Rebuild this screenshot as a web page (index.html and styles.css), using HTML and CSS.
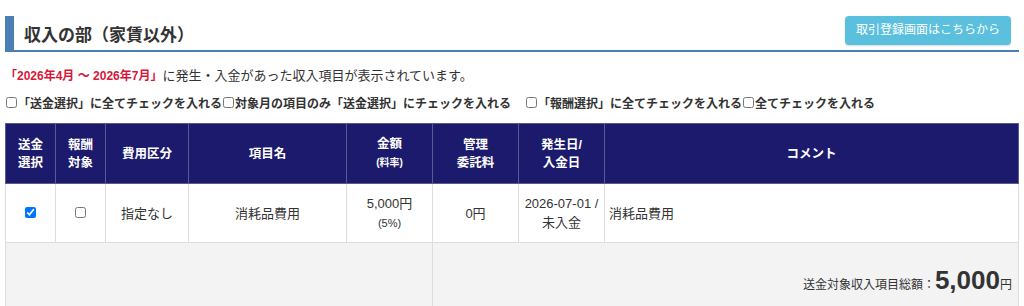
FILE: index.html
```html
<!DOCTYPE html>
<html lang="ja">
<head>
    <meta charset="UTF-8">
    <meta name="viewport" content="width=device-width, initial-scale=1.0">
    <title>収入の部（家賃以外）</title>
    <link rel="stylesheet" href="styles.css">
</head>
<body>
    <div class="section">
        <div class="section-head">
            <h2>収入の部（家賃以外）</h2>
            <a class="btn-info" href="#">取引登録画面はこちらから</a>
        </div>

        <p class="period"><span class="period-range">「2026年4月 〜 2026年7月」</span>に発生・入金があった収入項目が表示されています。</p>

        <div class="bulk-checks">
            <label><input type="checkbox">「送金選択」に全てチェックを入れる</label>
            <label><input type="checkbox">対象月の項目のみ「送金選択」にチェックを入れる</label>
            <label class="gap"><input type="checkbox">「報酬選択」に全てチェックを入れる</label>
            <label><input type="checkbox">全てチェックを入れる</label>
        </div>

        <table class="income-table">
            <colgroup>
                <col style="width: 50px">
                <col style="width: 50px">
                <col style="width: 83px">
                <col style="width: 158px">
                <col style="width: 86px">
                <col style="width: 86px">
                <col style="width: 86px">
                <col>
            </colgroup>
            <thead>
                <tr>
                    <th>送金<br>選択</th>
                    <th>報酬<br>対象</th>
                    <th>費用区分</th>
                    <th>項目名</th>
                    <th>金額<br><small>(料率)</small></th>
                    <th>管理<br>委託料</th>
                    <th>発生日/<br>入金日</th>
                    <th>コメント</th>
                </tr>
            </thead>
            <tbody>
                <tr>
                    <td><input type="checkbox" checked></td>
                    <td><input type="checkbox"></td>
                    <td>指定なし</td>
                    <td>消耗品費用</td>
                    <td>5,000円<br><small>(5%)</small></td>
                    <td>0円</td>
                    <td>2026-07-01 /<br>未入金</td>
                    <td class="comment">消耗品費用</td>
                </tr>
            </tbody>
            <tfoot>
                <tr>
                    <td colspan="5"></td>
                    <td colspan="3" class="total">送金対象収入項目総額：<strong>5,000</strong>円</td>
                </tr>
            </tfoot>
        </table>
    </div>
</body>
</html>
```

FILE: styles.css
```css
:root {
    --navy: #1b1a6c;
    --accent: #4a7fb5;
    --info: #5bc0de;
    --border: #dddddd;
    --text: #333333;
    --red: #d6173a;
}

body {
    font-family: "Liberation Sans", "Noto Sans CJK JP", sans-serif;
    color: var(--text);
    background: #ffffff;
    margin: 0;
    padding: 16px 5px 0;
    font-size: 12px;
}

.section-head {
    display: flex;
    align-items: center;
    justify-content: space-between;
    border-left: 9px solid var(--accent);
    border-bottom: 2px solid var(--accent);
    padding: 0 8px 0 10px;
    height: 34px;
}

.section-head h2 {
    margin: 0;
    font-size: 17px;
    font-weight: 700;
    color: #333;
}

.btn-info {
    background-color: var(--info);
    color: #ffffff;
    text-decoration: none;
    font-size: 12px;
    line-height: 17px;
    padding: 6px 11px;
    border-radius: 4px;
    margin-bottom: 6px;
    box-shadow: 0 1px 2px rgba(0, 0, 0, 0.15);
}

.period {
    margin: 15px 0 0;
    font-size: 13px;
    line-height: 17px;
}

.period-range {
    color: var(--red);
    font-weight: 700;
    font-size: 12px;
}

.bulk-checks {
    margin-top: 9px;
    font-size: 12px;
    font-weight: 700;
    display: flex;
    align-items: center;
}

.bulk-checks label {
    display: inline-flex;
    align-items: center;
}

.bulk-checks input {
    margin: 0 1px 0 1px;
    width: 11px;
    height: 11px;
}

.bulk-checks .gap {
    margin-left: 14px;
}

.income-table {
    margin-top: 12px;
    width: 1014px;
    border-collapse: collapse;
    table-layout: fixed;
    font-size: 13px;
}

.income-table th {
    background-color: var(--navy);
    color: #ffffff;
    font-weight: 700;
    font-size: 12.5px;
    height: 59px;
    line-height: 18px;
    border: 1px solid #5a5a8e;
    padding: 0 4px;
}

.income-table th small {
    font-size: 10px;
}

.income-table td {
    height: 58px;
    border: 1px solid var(--border);
    text-align: center;
    line-height: 19px;
    padding: 0 4px;
}

.income-table td small {
    font-size: 11px;
}

.income-table td input {
    margin: 0;
    width: 11px;
    height: 11px;
}

.income-table td.comment {
    text-align: left;
}

.income-table tfoot td {
    background-color: #f3f3f3;
    height: 64px;
}

.income-table td.total {
    text-align: right;
    font-size: 12px;
    padding-right: 6px;
    padding-top: 8px;
}

.income-table td.total strong {
    font-size: 26px;
    color: #333;
}
```
